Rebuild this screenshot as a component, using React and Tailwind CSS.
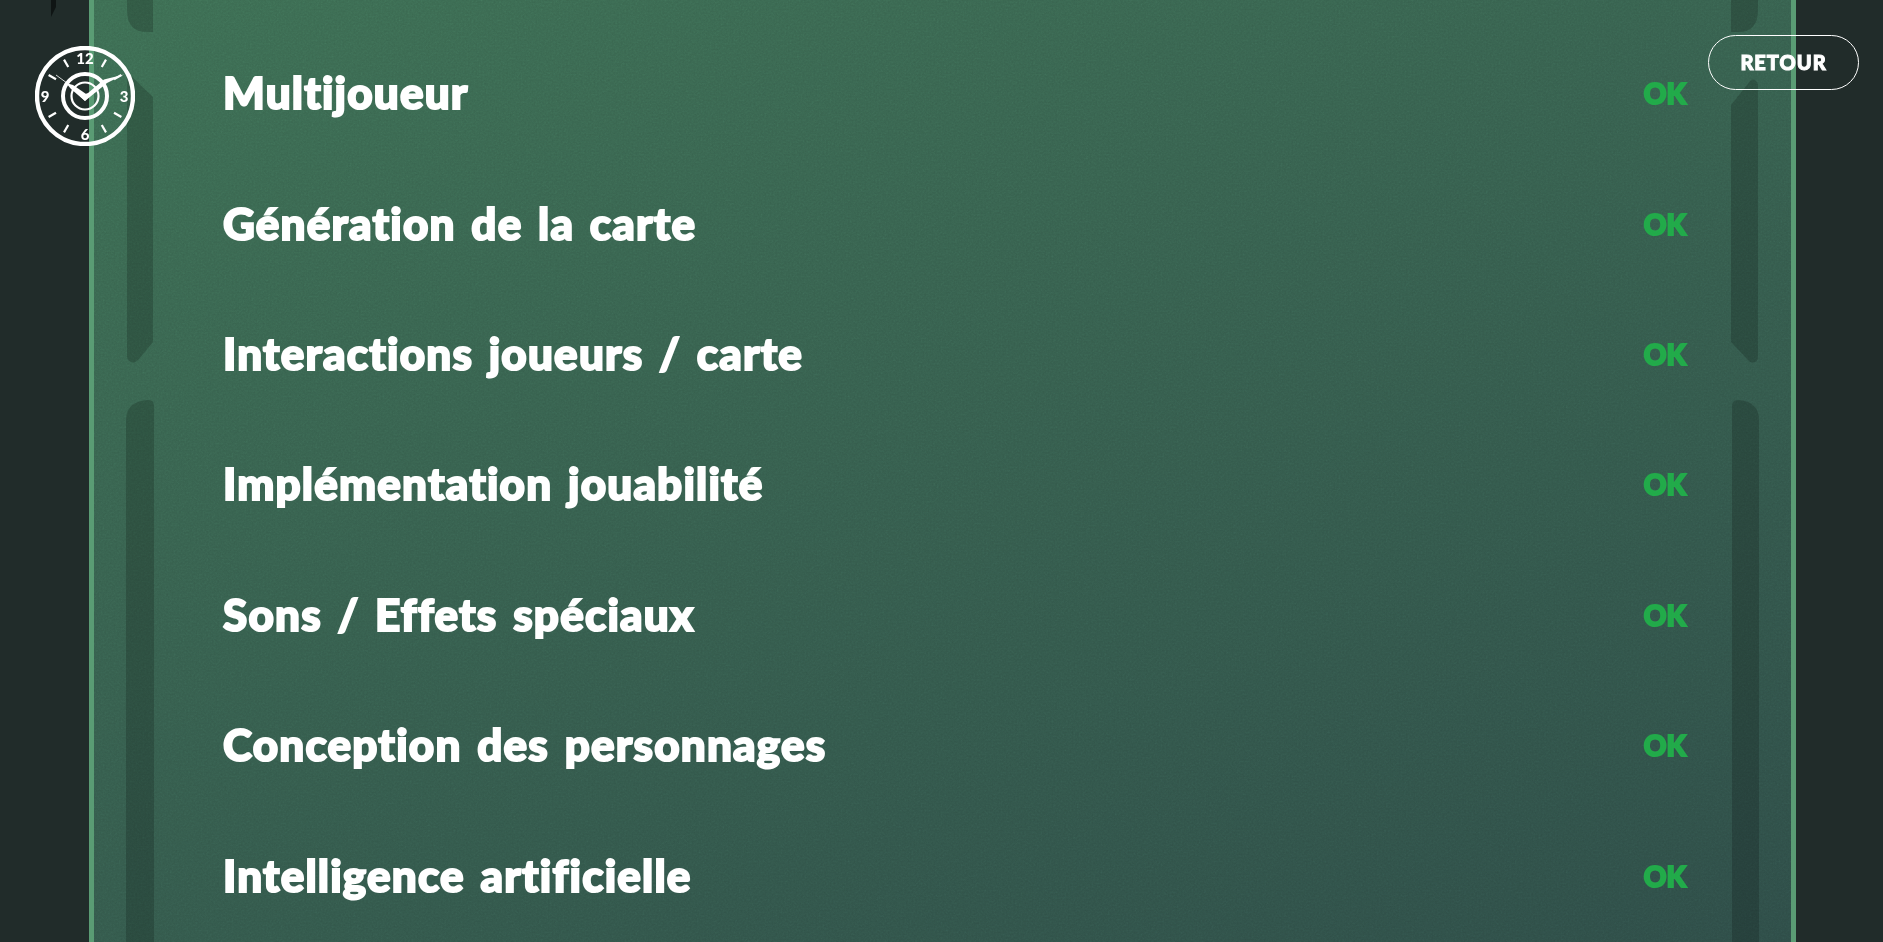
import React from 'react';

const rows = [
  'Multijoueur',
  'Génération de la carte',
  'Interactions joueurs / carte',
  'Implémentation jouabilité',
  'Sons / Effets spéciaux',
  'Conception des personnages',
  'Intelligence artificielle',
];

const ticks = [30, 60, 120, 150, 210, 240, 300, 330];

const Clock = () => (
  <svg viewBox="0 0 100 100" className="mt-[11px] w-[100px] h-[100px]" fill="none" stroke="white">
    <circle cx="50" cy="50" r="48" strokeWidth="4.4" />
    <circle cx="50" cy="50" r="22" strokeWidth="4" />
    <circle cx="50" cy="50" r="13.5" strokeWidth="2.2" />
    {ticks.map((a) => (
      <line key={a} x1="50" y1="8" x2="50" y2="16.5" strokeWidth="2.2" transform={`rotate(${a} 50 50)`} />
    ))}
    <g fill="white" stroke="none" fontFamily="Lato, sans-serif" fontWeight="900" fontSize="15" textAnchor="middle">
      <text x="50" y="18">12</text>
      <text x="89" y="56">3</text>
      <text x="50" y="94">6</text>
      <text x="10" y="56">9</text>
    </g>
    <path d="M45 50 L50 55 L72 37 L89 28.5 L69 33.5 L53 47 Z" fill="white" stroke="none" />
    <path d="M50 55 L54 50 L38 39 L31 37 L36 43 Z" fill="white" stroke="none" />
    <path d="M36 40 L21 29" strokeWidth="0.8" />
  </svg>
);

const Strips = () => (
  <svg viewBox="0 0 1706 942" className="absolute -left-[5px] top-0 w-[1706px] h-[942px]">
    <g fill="black" fillOpacity="0.18">
      <path d="M38 -5 H64 V32 H58 Q38 32 38 10 Z" />
      <path d="M38 72 L64 97 V342 L50 359 Q46 364 42 362 Q38 360 38 356 Z" />
      <path d="M37 942 V420 Q37 402 58 400 H60 Q65 400 65 406 V942 Z" />
      <path d="M1642 -5 H1669 V10 Q1669 32 1649 32 H1642 Z" />
      <path d="M1642 105 L1662 80 Q1666 78 1669 84 V356 Q1669 364 1661 362 L1642 342 Z" />
      <path d="M1643 942 V406 Q1643 400 1649 400 H1650 Q1670 402 1670 420 V942 Z" />
    </g>
  </svg>
);

const Grain = () => (
  <svg className="absolute inset-0 w-full h-full opacity-[0.22] mix-blend-overlay">
    <filter id="grain">
      <feTurbulence type="fractalNoise" baseFrequency="0.55" numOctaves="2" stitchTiles="stitch" />
      <feColorMatrix type="saturate" values="0" />
    </filter>
    <rect width="100%" height="100%" filter="url(#grain)" />
  </svg>
);

export default function App() {
  return (
    <div className="relative h-[942px] overflow-hidden bg-[#212c2a] font-['Lato',sans-serif]">
      <svg viewBox="0 0 5 17" className="absolute left-[51px] top-0 w-[5px] h-[17px]">
        <path d="M0 0 H5 V7 L0 17 Z" fill="#0f1514" />
      </svg>

      <main className="relative ml-[89px] w-[1707px] h-[942px] border-x-[5px] border-[#5a9c74] box-border bg-linear-[160deg] from-[#3c6c52] to-[#2e4c47]">
        <Strips />
        <Grain />
        <ul className="relative pt-[27px] pl-[129px] pr-[105px]">
          {rows.map((label) => (
            <li key={label} className="flex h-[130.4px] items-center justify-between">
              <span className="text-[44px] leading-none font-black tracking-[1.2px] [word-spacing:4px] text-white [-webkit-text-stroke:2px_white]">
                {label}
              </span>
              <span className="mt-[2px] text-[28px] leading-none font-black text-[#22ab4a] [-webkit-text-stroke:2px_#22ab4a]">OK</span>
            </li>
          ))}
        </ul>
      </main>

      <header className="absolute inset-x-0 top-0 flex items-start justify-between pl-[35px] pr-[24px] pt-[35px]">
        <Clock />
        <button className="w-[151px] h-[55px] pb-[2px] rounded-full border border-white text-white text-[20px] font-black tracking-[1px] [-webkit-text-stroke:1px_white]">
          RETOUR
        </button>
      </header>
    </div>
  );
}
